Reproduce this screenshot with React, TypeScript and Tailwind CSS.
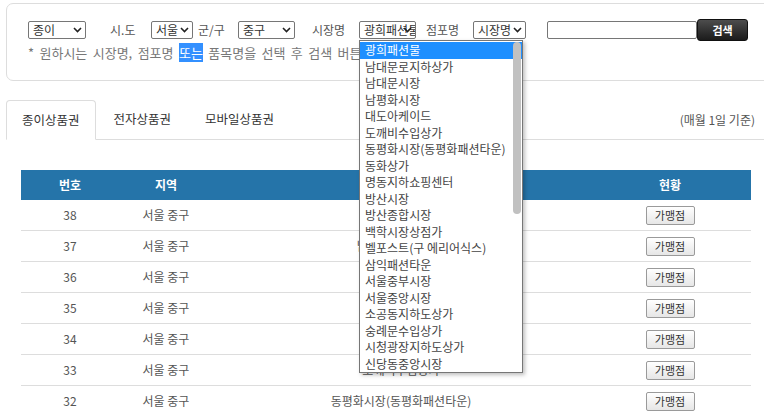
import React from "react";

const Chevron = () => (
  <svg width="9" height="6" viewBox="0 0 9 6" className="shrink-0">
    <polyline points="1,1 4.5,4.5 8,1" fill="none" stroke="#222" strokeWidth="1.6" />
  </svg>
);

function Sel({ w, text }: { w: string; text: string }) {
  return (
    <div
      className={`${w} relative h-[18px] border border-[#767676] rounded-[2px] bg-white flex items-center pl-[4px] text-[#333] overflow-hidden`}
    >
      <span className="whitespace-nowrap leading-none">{text}</span>
      <span className="absolute right-[3px] top-[5px]">
        <Chevron />
      </span>
    </div>
  );
}

const markets = [
  "광희패션물",
  "남대문로지하상가",
  "남대문시장",
  "남평화시장",
  "대도아케이드",
  "도깨비수입상가",
  "동평화시장(동평화패션타운)",
  "동화상가",
  "명동지하쇼핑센터",
  "방산시장",
  "방산종합시장",
  "백학시장상점가",
  "벨포스트(구 에리어식스)",
  "삼익패션타운",
  "서울중부시장",
  "서울중앙시장",
  "소공동지하도상가",
  "숭례문수입상가",
  "시청광장지하도상가",
  "신당동중앙시장",
];

const rows = [
  { no: 38, name: "광희패션물" },
  { no: 37, name: "남대문로지하상가" },
  { no: 36, name: "남대문시장" },
  { no: 35, name: "남평화시장" },
  { no: 34, name: "대도아케이드" },
  { no: 33, name: "도깨비수입상가" },
  { no: 32, name: "동평화시장(동평화패션타운)" },
];

export default function App() {
  return (
    <div className="relative w-[764px] h-[416px] overflow-hidden bg-white font-['Noto_Sans_CJK_KR',sans-serif] text-[12px] text-[#555]">
      {/* search box */}
      <div className="ml-[6px] mt-[3px] w-[800px] h-[78px] border border-[#ddd] rounded-[7px] pt-[15px] pl-[21px]">
        <div className="flex items-center h-[22px]">
          <Sel w="w-[58px]" text="종이" />
          <span className="ml-[24px] w-[28px] whitespace-nowrap">시.도</span>
          <div className="ml-[13px]">
            <Sel w="w-[42px]" text="서울" />
          </div>
          <span className="ml-[5px] w-[29px] whitespace-nowrap">군/구</span>
          <div className="ml-[11px]">
            <Sel w="w-[57px]" text="중구" />
          </div>
          <span className="ml-[17px] w-[36px] whitespace-nowrap">시장명</span>
          <div className="ml-[11px]">
            <Sel w="w-[57px]" text="광희패션물" />
          </div>
          <span className="ml-[10px] w-[36px] whitespace-nowrap">점포명</span>
          <div className="ml-[11px]">
            <Sel w="w-[53px]" text="시장명" />
          </div>
          <div className="ml-[21px] w-[150px] h-[18px] border border-[#767676] rounded-[2px] bg-white" />
          <button className="w-[51px] h-[22px] rounded-[3px] border border-[#111] bg-gradient-to-b from-[#4d4d4d] to-[#1c1c1c] text-white font-bold text-[11px] flex items-center justify-center">
            검색
          </button>
        </div>
        <div className="mt-[2px] leading-[19px] text-[13px] text-[#777] whitespace-nowrap [word-spacing:2.5px]">
          * 원하시는 시장명, 점포명 <span className="bg-[#3390ff] text-white">또는</span> 품목명을 선택 후 검색 버튼을
          눌러주세요.
        </div>
      </div>

      {/* tabs */}
      <div className="mt-[19px] ml-[6px] h-[40px] border-b border-[#ddd] flex items-start">
        <div className="h-[40px] border border-[#ddd] border-b-transparent bg-white rounded-t-[4px] px-[15px] flex items-center text-[#333] text-[12.5px]">
          종이상품권
        </div>
        <div className="ml-[2px] h-[39px] border border-transparent px-[15px] flex items-center text-[#333] text-[12.5px]">
          전자상품권
        </div>
        <div className="ml-[2px] h-[39px] border border-transparent px-[15px] flex items-center text-[#333] text-[12.5px]">
          모바일상품권
        </div>
        <div className="ml-auto mr-[9px] h-[39px] flex items-center text-[#555]">(매월 1일 기준)</div>
      </div>

      {/* table */}
      <div className="mt-[30px] ml-[21px] w-[730px]">
        <div className="grid grid-cols-[98px_94px_376px_162px] h-[30px] bg-[#2574a9] text-white font-bold items-center text-center">
          <div>번호</div>
          <div>지역</div>
          <div>시장명</div>
          <div>현황</div>
        </div>
        {rows.map((r) => (
          <div
            key={r.no}
            className="grid grid-cols-[98px_94px_376px_162px] h-[31px] border-b border-[#ddd] items-center text-center text-[#555]"
          >
            <div>{r.no}</div>
            <div>서울 중구</div>
            <div>{r.name}</div>
            <div className="flex justify-center">
              <div className="w-[49px] h-[19px] border border-[#9a9a9a] rounded-[2px] bg-gradient-to-b from-white to-[#e6e6e6] flex items-center justify-center text-[#333] text-[11px]">
                가맹점
              </div>
            </div>
          </div>
        ))}
      </div>

      {/* open dropdown */}
      <div className="absolute left-[359px] top-[40px] w-[164px] h-[333px] border border-[#767676] bg-white shadow-[2px_2px_4px_rgba(0,0,0,0.25)] pt-[1px] overflow-hidden z-10">
        {markets.map((m, i) => (
          <div
            key={m}
            className={`h-[16.5px] leading-[16.5px] pl-[5px] whitespace-nowrap text-[12px] ${
              i === 0 ? "bg-[#1e8fff] text-white" : "text-[#444]"
            }`}
          >
            {m}
          </div>
        ))}
        <div className="absolute right-[1px] top-[1px] w-[8px] h-[172px] rounded-full bg-[#c1c1c1]" />
      </div>
    </div>
  );
}
